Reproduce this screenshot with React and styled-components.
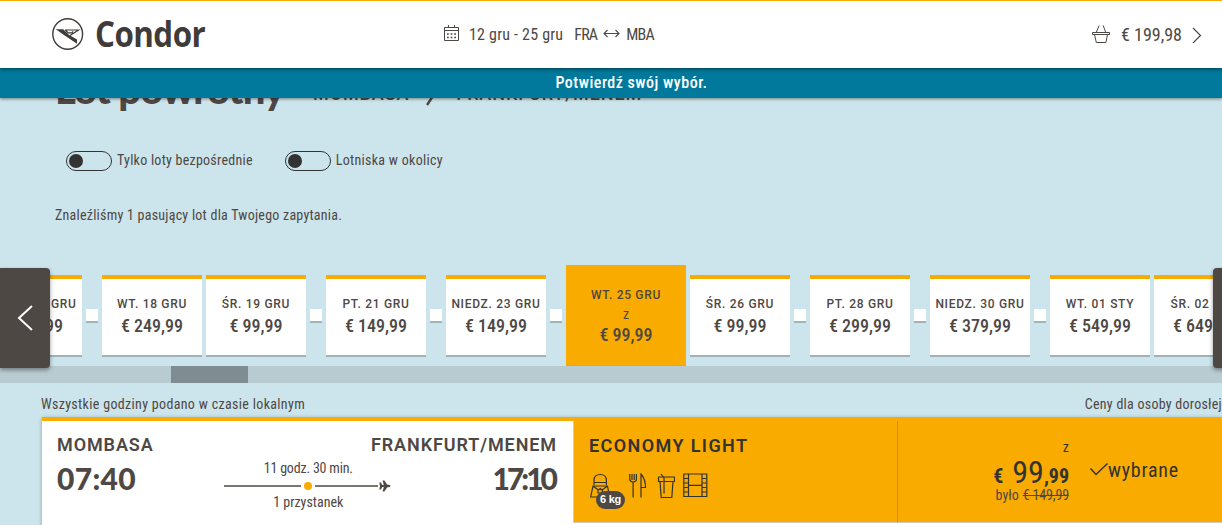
import React from "react";
import styled, { createGlobalStyle } from 'styled-components';

const orange = '#f9ab00';
const dark = '#4e4844';
const sky = '#cce4eb';

const GlobalStyle = createGlobalStyle`
	* {
		box-sizing: border-box;
	}

	body {
		margin: 0;
		background: ${sky};
		color: ${dark};
		font-family: 'Roboto Condensed', Roboto, sans-serif;
		font-size: 14px;
		overflow: hidden;
	}
`;

const Page = styled.div`
	height: 525px;
	overflow: hidden;
`;

const Text = styled.span`
	font-size: ${props => props.$size || 14}px;
	font-weight: ${props => props.$weight || 400};
	line-height: ${props => props.$line || 20}px;
	letter-spacing: ${props => props.$spacing || 0}px;
	white-space: nowrap;
`;

const Time = styled(Text)`
	font-family: Lato, sans-serif;
`;

const Caps = styled(Text)`
	font-family: Roboto, sans-serif;
`;

/* header */

const TopBar = styled.header`
	position: relative;
	z-index: 3;
	display: grid;
	grid-template-columns: 444px 1fr auto;
	height: 68px;
	padding-right: 20px;
	border-top: 1px solid ${orange};
	background: white;
	box-shadow: 0 1px 4px rgba(0, 0, 0, 0.5);
`;

const Brand = styled.div`
	display: flex;
	align-items: flex-start;
	gap: 10px;
	padding: 17px 0 0 52px;
`;

const BrandName = styled.span`
	margin-top: -2px;
	font-family: 'Open Sans', sans-serif;
	font-size: 36px;
	font-weight: 700;
	line-height: 36px;
	letter-spacing: -0.6px;
	color: #3f3b38;
	transform: scaleX(0.87);
	transform-origin: left;
`;

const TripSummary = styled.div`
	display: flex;
	align-items: flex-start;
	padding-top: 24px;
`;

const Dates = styled(Text)`
	margin: 0 11px 0 9px;
`;

const Airports = styled.div`
	display: flex;
	align-items: flex-start;
	gap: 6px;
`;

const Basket = styled.div`
	display: flex;
	align-items: flex-start;
	gap: 10px;
	padding-top: 24px;
`;

const Banner = styled.div`
	position: relative;
	z-index: 2;
	height: 30px;
	padding-left: 41px;
	background: #00799c;
	box-shadow: 0 1px 3px rgba(0, 0, 0, 0.45);
	color: white;
	text-align: center;
`;

/* title and filters */

const TitleRow = styled.div`
	display: flex;
	align-items: flex-start;
	height: 60px;
	margin-top: -32px;
	padding-left: 55px;
`;

const Title = styled.h1`
	width: 258px;
	margin: 0;
	font-family: Lato, sans-serif;
	font-size: 40px;
	font-weight: 900;
	line-height: 46px;
	letter-spacing: -1px;
	white-space: nowrap;
`;

const TitleCity = styled(Caps)`
	margin-top: 18px;
`;

const Chevron = styled.svg`
	margin: 0 18px 0 17px;
`;

const Filters = styled.div`
	display: flex;
	gap: 32px;
	margin-top: 25px;
	padding-left: 66px;
`;

const Filter = styled.label`
	display: flex;
	gap: 5px;
	height: 20px;
	line-height: 18px;
`;

const Switch = styled.span`
	width: 46px;
	height: 20px;
	padding: 2px;
	border: 1px solid #333;
	border-radius: 10px;

	&::before {
		content: '';
		display: block;
		width: 14px;
		height: 14px;
		border-radius: 50%;
		background: #333;
	}
`;

const Found = styled.div`
	margin-top: 34px;
	padding-left: 55px;
	height: 20px;
`;

/* day slider */

const Slider = styled.section`
	position: relative;
	margin-top: 40px;
`;

const Days = styled.div`
	display: flex;
	align-items: center;
	gap: 4px;
	height: 101px;
	margin-left: -18px;
`;

const Day = styled.div`
	flex: none;
	display: flex;
	flex-direction: column;
	align-items: center;
	width: ${props => props.$selected ? 120 : 100}px;
	height: ${props => props.$selected ? 101 : 82}px;
	padding-top: ${props => props.$selected ? 17 : 16}px;
	border-top: 4px solid ${orange};
	border-bottom: ${props => props.$selected ? 1 : 2}px solid ${props => props.$selected ? '#d9a93a' : '#a0b3b8'};
	background: ${props => props.$selected ? orange : 'white'};
`;

const NoFlight = styled.div`
	flex: none;
	width: 12px;
	height: 14px;
	border-bottom: 2px solid #a0b3b8;
	background: white;
`;

const Arrow = styled.button`
	position: absolute;
	top: 3px;
	${props => props.$next ? 'left: 1213px;' : 'left: 0;'}
	display: flex;
	align-items: center;
	justify-content: center;
	width: 50px;
	height: 100px;
	padding: 0;
	border: 0;
	border-radius: ${props => props.$next ? '4px 0 0 4px' : '0 4px 4px 0'};
	background: ${dark};
	box-shadow: 0 2px 4px rgba(0, 0, 0, 0.4);
`;

const Track = styled.div`
	height: 17px;
	padding-left: 171px;
	background: #b8cbd1;
`;

const Thumb = styled.div`
	width: 77px;
	height: 17px;
	background: #7f8c91;
`;

/* flight */

const Notes = styled.div`
	display: flex;
	justify-content: space-between;
	height: 34px;
	padding: 11px 0 0 41px;
`;

const Flight = styled.article`
	display: grid;
	grid-template-columns: 531px 1fr;
	height: 120px;
	margin-left: 42px;
	border-top: 4px solid ${orange};
	background: white;
	box-shadow: 0 1px 4px rgba(0, 0, 0, 0.3);
`;

const Route = styled.div`
	padding: 14px 16px 0 15px;
`;

const RouteRow = styled.div`
	display: flex;
	align-items: flex-start;
	justify-content: space-between;
	height: 28px;
`;

const Arrival = styled(Time)`
	margin-right: 2px;
`;

const Leg = styled.div`
	display: flex;
	flex-direction: column;
	align-items: center;
	width: 168px;
	margin: -4px 12px 0 0;
`;

const LegLine = styled.div`
	display: flex;
	align-items: center;
	align-self: stretch;
	height: 18px;
`;

const Line = styled.span`
	width: ${props => props.$width}px;
	height: 2px;
	background: #7b7672;
`;

const Stop = styled.span`
	width: 8px;
	height: 8px;
	margin: 0 3px;
	border-radius: 50%;
	background: ${orange};
`;

const Fare = styled.div`
	display: grid;
	grid-template-columns: 324px 1fr;
	height: 102px;
	border-left: 1px solid #d0cecc;
	border-bottom: 1px solid #cfcac0;
	background: ${orange};
	color: #333;
`;

const FareInfo = styled.div`
	display: flex;
	flex-direction: column;
	padding: 15px 0 0 15px;
	border-right: 1px solid #c98f14;
`;

const Perks = styled.div`
	display: flex;
	align-items: flex-start;
	margin-top: 17px;
`;

const Perk = styled.span`
	position: relative;
	width: ${props => props.$width}px;
	height: 27px;
`;

const Badge = styled.span`
	position: absolute;
	top: 18px;
	left: 7px;
	width: 29px;
	height: 18px;
	border-radius: 9px;
	background: ${dark};
	color: white;
	font: 700 11px/17px 'Liberation Sans', sans-serif;
	letter-spacing: -0.3px;
	text-align: center;
`;

const FarePrice = styled.div`
	display: flex;
	gap: 21px;
`;

const Amounts = styled.div`
	display: flex;
	flex-direction: column;
	align-items: flex-end;
	width: 171px;
	padding-top: 16px;
`;

const Price = styled.div`
	display: flex;
	align-items: baseline;
	height: 28px;
	padding-top: 5px;
`;

const Currency = styled(Text)`
	margin-right: 9px;
`;

const Was = styled.div`
	display: flex;
	gap: 4px;
	color: ${dark};
`;

const Chosen = styled.div`
	display: flex;
	align-items: flex-start;
	padding-top: 39px;
`;

const Logo = () => (
	<svg width="33" height="34" viewBox="0 0 33 34" fill="none" stroke="#3f3b38">
		<ellipse cx="15.7" cy="16" rx="14.9" ry="15.3" strokeWidth="1.4" />
		<path d="M3.8 11.3h7.4l5.6 5.5 8.2 4.8v4.2l-8.2-5.6-5.2-3.4z" fill="#3f3b38" stroke="none" />
		<path d="M13 12h13.5L18 17.4M13.5 12.3l2.6 2.5 4-.2 1-1.2" strokeWidth="1.2" />
	</svg>
);

const CalendarIcon = () => (
	<svg width="16" height="17" viewBox="0 0 16 17" fill="none" stroke={dark}>
		<path d="M.5 2.5h14v13H.5zM.5 5.5h14M4.5 0v3M10.5 0v3" />
		<path d="M3 9h10M3 12.5h10" strokeWidth="1.6" strokeDasharray="1.8 1.8" />
	</svg>
);

const SwapIcon = () => (
	<svg width="17" height="18" viewBox="0 0 17 18" fill="none" stroke={dark} strokeWidth="1.1">
		<path d="M1 8.5h15M4.5 5L1 8.5 4.5 12M12.5 5L16 8.5 12.5 12" />
	</svg>
);

const BasketIcon = () => (
	<svg width="19" height="19" viewBox="0 0 19 19" fill="none" stroke={dark}>
		<path d="M.5 7.5h17v2H.5zM2.5 9.5l1.8 8h9.6l1.6-8M4.2 7.5l3-7M13.8 7.5l-2.6-7" />
	</svg>
);

const PlaneIcon = () => (
	<svg width="13" height="12" viewBox="0 0 13 12" fill={dark}>
		<path d="M1.3 2.5h1.6L4.3 5h1.5L4.6.5h1.8l2.9 4.300h1.500q1.700.4 1.700 1.200t-1.700 1.200H9.300l-2.900 4.300H4.600L5.800 7H4.300L2.900 9.500H1.300L2 6z" />
	</svg>
);

const BagIcon = () => (
	<svg width="22" height="25" viewBox="0 0 22 25" fill="none" stroke="#333" strokeWidth="1.2">
		<path d="M5 12V7.5q0-6 6.2-6t6.2 6V12M5 9.5h12.4M4 13h14.5l2 11H1.7zM4.5 13.5l5 3.5 1.7-1.5 1.7 1.5 5-3.5M9 16.5h4.4V20H9z" />
	</svg>
);

const CutleryIcon = () => (
	<svg width="20" height="27" viewBox="0 0 20 27" fill="none" stroke="#333" strokeWidth="1.2">
		<path d="M1.8 1v5.5q0 2 3.3 2.5 3.3-.5 3.3-2.5V1M4 1v6M6.2 1v6M5.1 9v15.5M13 24.500V1q4.500 5 4.500 13.500H13" />
	</svg>
);

const CupIcon = () => (
	<svg width="18" height="26" viewBox="0 0 18 26" fill="none" stroke="#333" strokeWidth="1.2">
		<path d="M1.5 4h16v4.5h-16zM3 8.5l1.2 16h10.6l1.2-16M4 1l3 4v15.5" />
	</svg>
);

const FilmIcon = () => (
	<svg width="25" height="25" viewBox="0 0 25 25" fill="none" stroke="#333" strokeWidth="1.2">
		<path d="M.8 1h23v22.5H.8zM5.5 1v22.5M19 1v22.5M5.5 12.3H19" />
		<path d="M1 5.5h4.5M1 10h4.5M1 14.5h4.5M1 19h4.5M19 5.5h4.5M19 10h4.5M19 14.5h4.5M19 19h4.5" />
	</svg>
);

const days = [
	{ name: 'NIEDZ. 16 GRU', price: '€ 149,99' },
	null,
	{ name: 'WT. 18 GRU', price: '€ 249,99' },
	{ name: 'ŚR. 19 GRU', price: '€ 99,99' },
	null,
	{ name: 'PT. 21 GRU', price: '€ 149,99' },
	null,
	{ name: 'NIEDZ. 23 GRU', price: '€ 149,99' },
	null,
	{ name: 'WT. 25 GRU', price: '€ 99,99', selected: true },
	{ name: 'ŚR. 26 GRU', price: '€ 99,99' },
	null,
	{ name: 'PT. 28 GRU', price: '€ 299,99' },
	null,
	{ name: 'NIEDZ. 30 GRU', price: '€ 379,99' },
	null,
	{ name: 'WT. 01 STY', price: '€ 549,99' },
	{ name: 'ŚR. 02 STY', price: '€ 649,99' },
];

const DayCard = ({ day }) => {
	if (!day) return <NoFlight />;

	return (
		<Day $selected={day.selected}>
			<Caps $size={12} $weight={500} $spacing={0.7} $line={18}>{day.name}</Caps>
			{day.selected && <Text $line={20}>z</Text>}
			<Text $size={18} $weight={500} $line={day.selected ? 22 : 26}>{day.price}</Text>
		</Day>
	);
}

export default function App() {
	return (
		<Page>
			<GlobalStyle />
			<TopBar>
				<Brand>
					<Logo />
					<BrandName>Condor</BrandName>
				</Brand>
				<TripSummary>
					<CalendarIcon />
					<Dates $size={16} $spacing={0.2}>12 gru - 25 gru</Dates>
					<Airports>
						<Text $size={16} $spacing={-0.8}>FRA</Text>
						<SwapIcon />
						<Text $size={16} $spacing={-0.8}>MBA</Text>
					</Airports>
				</TripSummary>
				<Basket>
					<BasketIcon />
					<Text $size={18}>€ 199,98</Text>
					<svg width="10" height="18" viewBox="0 0 10 18" fill="none" stroke={dark} strokeWidth="1.2">
						<path d="M1 3l7.5 7.5L1 18" />
					</svg>
				</Basket>
			</TopBar>
			<Banner>
				<Text $size={16} $weight={500} $spacing={0.5} $line={30}>Potwierdź swój wybór.</Text>
			</Banner>

			<TitleRow>
				<Title>Lot powrotny</Title>
				<TitleCity $size={18} $weight={500} $spacing={0.9}>MOMBASA</TitleCity>
				<Chevron width="12" height="40" viewBox="0 0 12 40" fill="none" stroke={dark} strokeWidth="2.5">
					<path d="M1 16l8 11-8 12" />
				</Chevron>
				<TitleCity $size={18} $weight={500} $spacing={0.9}>FRANKFURT/MENEM</TitleCity>
			</TitleRow>
			<Filters>
				<Filter>
					<Switch />
					<Text $line={18} $spacing={0.25}>Tylko loty bezpośrednie</Text>
				</Filter>
				<Filter>
					<Switch />
					<Text $line={18} $spacing={0.3}>Lotniska w okolicy</Text>
				</Filter>
			</Filters>
			<Found>
				<Text $spacing={0.24}>Znaleźliśmy 1 pasujący lot dla Twojego zapytania.</Text>
			</Found>

			<Slider>
				<Days>
					{days.map((day, i) => <DayCard key={i} day={day} />)}
				</Days>
				<Track>
					<Thumb />
				</Track>
				<Arrow>
					<svg width="16" height="26" viewBox="0 0 16 26" fill="none" stroke="white" strokeWidth="2">
						<path d="M15 1L2 13l13 12" />
					</svg>
				</Arrow>
				<Arrow $next />
			</Slider>

			<Notes>
				<Text $spacing={0.33}>Wszystkie godziny podano w czasie lokalnym</Text>
				<Text $spacing={0.25}>Ceny dla osoby dorosłej</Text>
			</Notes>

			<Flight>
				<Route>
					<RouteRow>
						<Caps $size={18} $weight={600} $spacing={0.9}>MOMBASA</Caps>
						<Caps $size={18} $weight={600} $spacing={0.9}>FRANKFURT/MENEM</Caps>
					</RouteRow>
					<RouteRow>
						<Time $size={30} $weight={900} $line={30} $spacing={0.3}>07:40</Time>
						<Leg>
							<Text $line={18} $spacing={-0.2}>11 godz. 30 min.</Text>
							<LegLine>
								<Line $width={77} />
								<Stop />
								<Line $width={63} />
								<PlaneIcon />
							</LegLine>
							<Text $line={14}>1 przystanek</Text>
						</Leg>
						<Arrival $size={30} $weight={900} $line={30} $spacing={-3}>17:10</Arrival>
					</RouteRow>
				</Route>
				<Fare>
					<FareInfo>
						<Caps $size={18} $weight={600} $spacing={1.4}>ECONOMY LIGHT</Caps>
						<Perks>
							<Perk $width={39}>
								<BagIcon />
								<Badge>6 kg</Badge>
							</Perk>
							<Perk $width={29}><CutleryIcon /></Perk>
							<Perk $width={26}><CupIcon /></Perk>
							<Perk $width={25}><FilmIcon /></Perk>
						</Perks>
					</FareInfo>
					<FarePrice>
						<Amounts>
							<Text>z</Text>
							<Price>
								<Currency $size={20} $weight={700}>€</Currency>
								<Text $size={32}>99</Text>
								<Text $size={20} $weight={700}>,99</Text>
							</Price>
							<Was>
								<Text>było</Text>
								<Text as="s" $spacing={-0.15}>€ 149,99</Text>
							</Was>
						</Amounts>
						<Chosen>
							<svg width="18" height="20" viewBox="0 0 18 20" fill="none" stroke="#333" strokeWidth="1.5">
								<path d="M.5 8.5L6 14.5 17.5 3.5" />
							</svg>
							<Text $size={20} $spacing={0.75}>wybrane</Text>
						</Chosen>
					</FarePrice>
				</Fare>
			</Flight>
		</Page>
	);
}
